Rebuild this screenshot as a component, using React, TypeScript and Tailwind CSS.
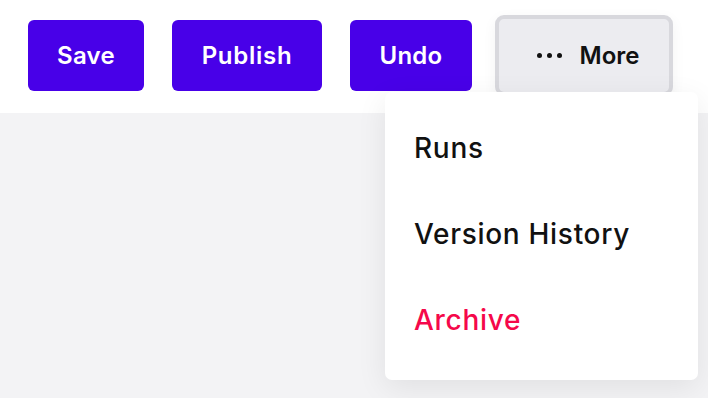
import React from "react";

export default function App() {
  return (
    <div className="relative w-[708px] h-[398px] overflow-hidden bg-[#f3f3f5]" style={{ fontFamily: "Inter, 'Noto Sans', sans-serif" }}>
      <div className="h-[113px] bg-white flex items-start pl-[28px] pt-[20px] gap-[28px]">
        <button className="w-[116px] h-[71px] rounded-[6px] bg-[#4800e8] text-white text-[24px] font-semibold tracking-[0.01em]">Save</button>
        <button className="w-[150px] h-[71px] rounded-[6px] bg-[#4800e8] text-white text-[24px] font-semibold tracking-[0.03em]">Publish</button>
        <button className="w-[122px] h-[71px] rounded-[6px] bg-[#4800e8] text-white text-[24px] font-semibold tracking-[0.01em]">Undo</button>
        <button className="-ml-[5px] -mt-[5px] w-[178px] h-[81px] rounded-[9px] border-[4px] border-[#d8d8dd] bg-[#ececf0] text-[#111] text-[24px] font-semibold flex items-center justify-center gap-[18px] pl-[8px] shadow-[0_4px_14px_rgba(0,0,0,0.05)]">
          <span className="flex gap-[5px] items-center">
            <span className="w-[5px] h-[5px] rounded-full bg-[#111]" />
            <span className="w-[5px] h-[5px] rounded-full bg-[#111]" />
            <span className="w-[5px] h-[5px] rounded-full bg-[#111]" />
          </span>
          <span>More</span>
        </button>
      </div>
      <div className="absolute left-[385px] top-[92px] w-[313px] h-[288px] bg-white rounded-[7px] shadow-[0_8px_30px_rgba(0,0,0,0.08)] flex flex-col pt-[13px]">
        <div className="h-[86px] flex items-center pl-[29px] text-[28px] font-medium tracking-[0.025em] text-[#111]">Runs</div>
        <div className="h-[86px] flex items-center pl-[29px] text-[28px] font-medium tracking-[0.025em] text-[#111]">Version History</div>
        <div className="h-[86px] flex items-center pl-[29px] text-[28px] font-medium tracking-[0.025em] text-[#f5084a]">Archive</div>
      </div>
    </div>
  );
}
